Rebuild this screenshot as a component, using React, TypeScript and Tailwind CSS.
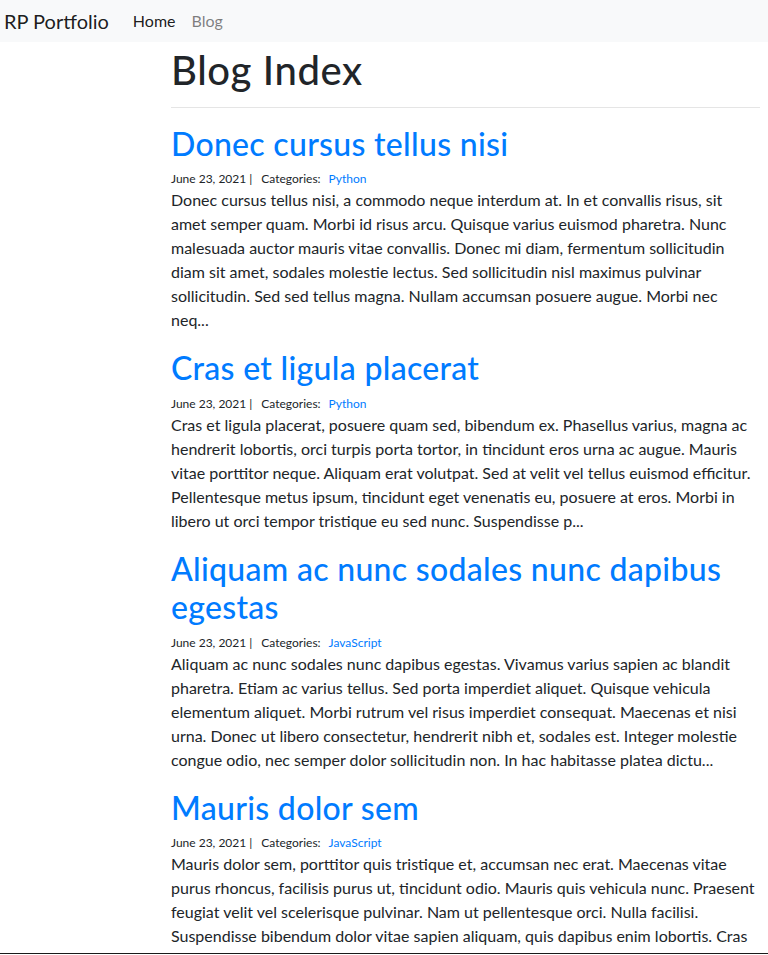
import React from 'react'

const posts = [
  {
    title: 'Donec cursus tellus nisi',
    category: 'Python',
    body: 'Donec cursus tellus nisi, a commodo neque interdum at. In et convallis risus, sit amet semper quam. Morbi id risus arcu. Quisque varius euismod pharetra. Nunc malesuada auctor mauris vitae convallis. Donec mi diam, fermentum sollicitudin diam sit amet, sodales molestie lectus. Sed sollicitudin nisl maximus pulvinar sollicitudin. Sed sed tellus magna. Nullam accumsan posuere augue. Morbi nec neq...',
  },
  {
    title: 'Cras et ligula placerat',
    category: 'Python',
    body: 'Cras et ligula placerat, posuere quam sed, bibendum ex. Phasellus varius, magna ac hendrerit lobortis, orci turpis porta tortor, in tincidunt eros urna ac augue. Mauris vitae porttitor neque. Aliquam erat volutpat. Sed at velit vel tellus euismod efficitur. Pellentesque metus ipsum, tincidunt eget venenatis eu, posuere at eros. Morbi in libero ut orci tempor tristique eu sed nunc. Suspendisse p...',
  },
  {
    title: 'Aliquam ac nunc sodales nunc dapibus egestas',
    category: 'JavaScript',
    body: 'Aliquam ac nunc sodales nunc dapibus egestas. Vivamus varius sapien ac blandit pharetra. Etiam ac varius tellus. Sed porta imperdiet aliquet. Quisque vehicula elementum aliquet. Morbi rutrum vel risus imperdiet consequat. Maecenas et nisi urna. Donec ut libero consectetur, hendrerit nibh et, sodales est. Integer molestie congue odio, nec semper dolor sollicitudin non. In hac habitasse platea dictu...',
  },
  {
    title: 'Mauris dolor sem',
    category: 'JavaScript',
    body: 'Mauris dolor sem, porttitor quis tristique et, accumsan nec erat. Maecenas vitae purus rhoncus, facilisis purus ut, tincidunt odio. Mauris quis vehicula nunc. Praesent feugiat velit vel scelerisque pulvinar. Nam ut pellentesque orci. Nulla facilisi. Suspendisse bibendum dolor vitae sapien aliquam, quis dapibus enim lobortis. Cras sed nisl sit amet ipsum tristique ultrices. Ut vel mauris...',
  },
]

export default function App() {
  return (
    <div className="flex flex-col h-[955px] bg-white text-[#212529] font-['Lato',sans-serif]">
      <div className="flex-1 overflow-hidden">
        <nav className="flex items-center h-[42px] bg-[#f8f9fa] pl-[4px]">
          <a href="#" className="text-[20px] text-black/90 mr-[24px]">RP Portfolio</a>
          <a href="#" className="text-[16px] text-black/90 mr-[16px]">Home</a>
          <a href="#" className="text-[16px] text-black/50">Blog</a>
        </nav>
        <main className="pl-[171px] pr-[8px]">
          <h1 className="text-[40px] leading-[1.2] font-medium mt-[4px] tracking-[0.6px]">Blog Index</h1>
          <hr className="border-t border-black/10 mt-[13px] mb-[17px]" />
          {posts.map((post, i) => (
            <article key={i} className="mb-[17px]">
              <h2 className="text-[32px] leading-[1.2] font-medium text-[#007bff] tracking-[0.3px]">
                <a href="#">{post.title}</a>
              </h2>
              <small className="flex text-[12px] leading-[18px] mt-[7px]">
                <span>June 23, 2021 |</span>
                <span className="ml-[9px]">Categories:</span>
                <a href="#" className="ml-[8px] text-[#007bff]">{post.category}</a>
              </small>
              <p className="text-[16px] leading-[24px] pr-[3px]">{post.body}</p>
            </article>
          ))}
        </main>
      </div>
      <div className="h-px bg-[#1a1a1a]" />
      <div className="h-px" />
    </div>
  )
}
